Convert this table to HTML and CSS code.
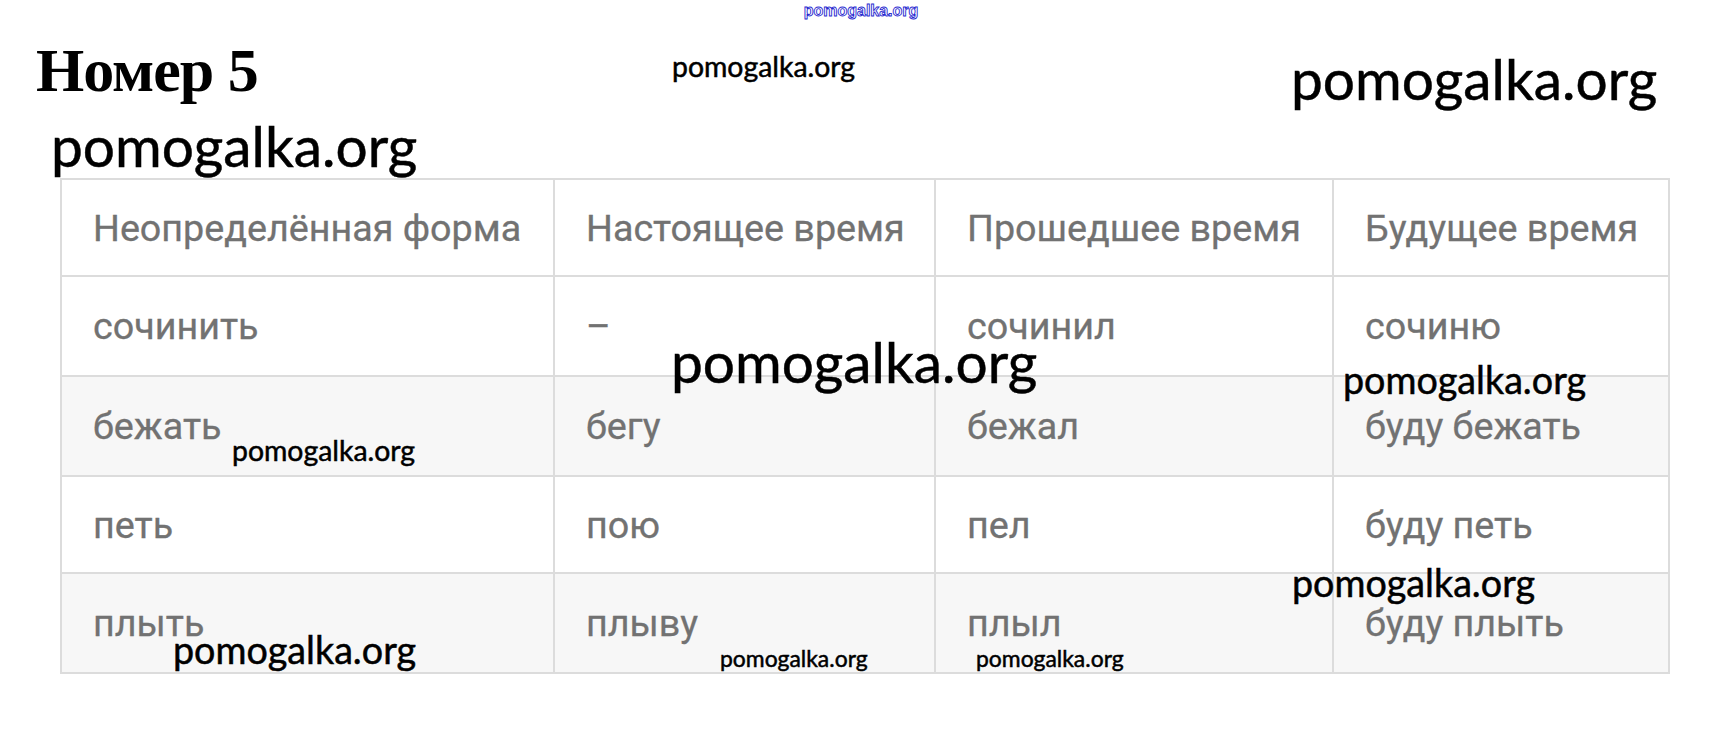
FILE: index.html
```html
<!DOCTYPE html>
<html lang="ru">
<head>
<meta charset="utf-8">
<title>Номер 5</title>
<link rel="stylesheet" href="styles.css">
</head>
<body>
<div class="page">
  <div class="topline"><span class="outline">pomogalka.org</span></div>
  <h1 class="title">Номер 5</h1>
  <table class="grid">
    <colgroup>
      <col class="c1"><col class="c2"><col class="c3"><col class="c4">
    </colgroup>
    <tr class="head">
      <td>Неопределённая форма</td><td>Настоящее время</td><td>Прошедшее время</td><td>Будущее время</td>
    </tr>
    <tr>
      <td>сочинить</td><td>–</td><td>сочинил</td><td>сочиню</td>
    </tr>
    <tr class="alt">
      <td>бежать</td><td>бегу</td><td>бежал</td><td>буду бежать</td>
    </tr>
    <tr class="short">
      <td>петь</td><td>пою</td><td>пел</td><td>буду петь</td>
    </tr>
    <tr class="alt">
      <td>плыть</td><td>плыву</td><td>плыл</td><td>буду плыть</td>
    </tr>
  </table>

  <span class="wm wm-l" style="left:51px;top:117px">pomogalka.org</span>
  <span class="wm wm-l" style="left:1291px;top:50px">pomogalka.org</span>
  <span class="wm wm-l" style="left:671px;top:333px">pomogalka.org</span>
  <span class="wm wm-m" style="left:1343px;top:361px">pomogalka.org</span>
  <span class="wm wm-m" style="left:1292px;top:564px">pomogalka.org</span>
  <span class="wm wm-m" style="left:173px;top:631px">pomogalka.org</span>
  <span class="wm wm-s" style="left:672px;top:52px">pomogalka.org</span>
  <span class="wm wm-s" style="left:232px;top:436px">pomogalka.org</span>
  <span class="wm wm-xs" style="left:720px;top:647px">pomogalka.org</span>
  <span class="wm wm-xs" style="left:976px;top:647px">pomogalka.org</span>
</div>
</body>
</html>
```

FILE: styles.css
```css
html, body {
  margin: 0;
  padding: 0;
  background: #ffffff;
}

.page {
  position: relative;
  width: 1722px;
  height: 731px;
  overflow: hidden;
  font-family: "Liberation Sans", Arial, sans-serif;
}

.topline {
  height: 24px;
  text-align: center;
}

.outline {
  display: inline-block;
  padding-top: 2px;
  font-family: "Liberation Sans", Arial, sans-serif;
  font-weight: bold;
  font-size: 16px;
  line-height: 18px;
  color: #ffffff;
  -webkit-text-stroke: 0.9px #2a2ad0;
}

.title {
  margin: 15px 0 0 36px;
  height: 62px;
  font-family: "Liberation Serif", "Times New Roman", serif;
  font-weight: bold;
  font-size: 62px;
  line-height: 62px;
  color: #000;
  letter-spacing: -1px;
}

.grid {
  margin: 77px 0 0 60px;
  border-collapse: collapse;
  table-layout: fixed;
  width: 1608px;
  border: 2px solid #dcdcdc;
  font-family: Roboto, "Liberation Sans", Arial, sans-serif;
  font-size: 37.7px;
  color: #727272;
}

.c1 { width: 493px; }
.c2 { width: 381px; }
.c3 { width: 398px; }
.c4 { width: 336px; }

.grid td {
  height: 98px;
  border: 2px solid #dcdcdc;
  padding: 0 0 0 31px;
  vertical-align: middle;
  white-space: nowrap;
  -webkit-text-stroke: 0.3px #727272;
}

.grid .head td,
.grid .short td {
  height: 95px;
}

.grid .alt td {
  background: #f7f7f7;
}

.wm {
  position: absolute;
  font-family: Lato, "Open Sans", sans-serif;
  font-weight: 400;
  line-height: 1;
  color: #000;
  white-space: nowrap;
  -webkit-text-stroke: 0.5px #000;
}

.wm-l { font-size: 56.8px; }
.wm-m { font-size: 37.7px; }
.wm-s { font-size: 28.4px; }
.wm-xs { font-size: 22.9px; }
```
